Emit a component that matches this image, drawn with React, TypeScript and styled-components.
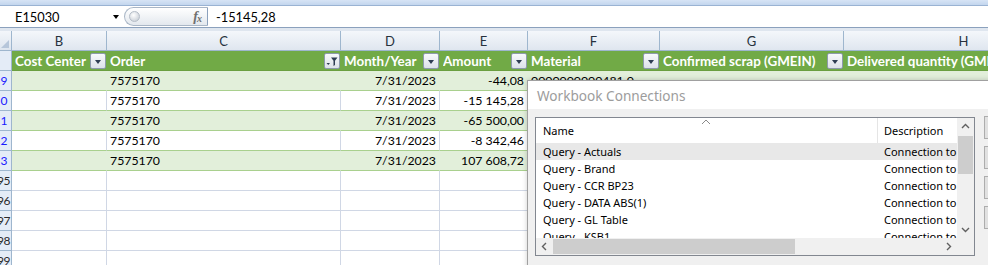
import React from "react";
import styled, { createGlobalStyle } from "styled-components";

const GlobalStyle = createGlobalStyle`
  html, body { margin: 0; padding: 0; background: #fff; }
  #root { width: 988px; height: 265px; }
`;

const COLS = "12px 95px 234px 99px 88px 132px 184px 240px";

const Root = styled.div`
  position: relative;
  width: 988px;
  height: 265px;
  overflow: hidden;
  font-family: Lato, "Liberation Sans", sans-serif;
  font-size: 12.3px;
  color: #000;
`;

const TopStrip = styled.div`
  height: 5px;
  background: linear-gradient(#d7e4f5, #c3d6ee);
  border-bottom: 1px solid #9ab3d3;
`;

const FormulaBar = styled.div`
  display: flex;
  align-items: center;
  height: 21px;
  background: #fff;
  border-bottom: 1px solid #8ba1bd;
`;

const NameBox = styled.div`
  width: 113px;
  box-sizing: border-box;
  padding-left: 15px;
  font-size: 12.8px;
`;

const NameArrow = styled.div`
  width: 0;
  height: 0;
  border-left: 3.5px solid transparent;
  border-right: 3.5px solid transparent;
  border-top: 4px solid #000;
  margin-right: 5px;
`;

const FxPill = styled.div`
  width: 84px;
  height: 19px;
  box-sizing: border-box;
  display: flex;
  align-items: center;
  justify-content: space-between;
  padding: 0 6px 0 4px;
  border: 1px solid #a9b6c6;
  border-right-color: #8ba1bd;
  border-radius: 10px 0 0 10px;
  background: linear-gradient(#ffffff, #e3e8ee);
`;

const Grip = styled.div`
  width: 9px;
  height: 9px;
  border-radius: 50%;
  border: 1px solid #b4bcc7;
  background: radial-gradient(circle at 40% 35%, #ffffff, #bfc6cf);
`;

const Fx = styled.span`
  font-family: "Liberation Serif", serif;
  font-style: italic;
  font-weight: 700;
  font-size: 14px;
  color: #707070;
  letter-spacing: -1px;

  sub {
    font-size: 10px;
    vertical-align: -1px;
  }
`;

const FormulaText = styled.div`
  padding-left: 8px;
  font-size: 12.8px;
`;

const Gutter = styled.div`
  height: 3px;
  background: #dfe6ef;
`;

const GridRow = styled.div`
  display: grid;
  grid-template-columns: ${COLS};
  height: 20px;
`;

const Corner = styled.div`
  box-sizing: border-box;
  display: flex;
  align-items: flex-end;
  justify-content: flex-end;
  padding: 0 2px 2px 0;
  background: linear-gradient(#f3f6fa, #dde5ef);
  border-right: 1px solid #9eb6ce;
  border-bottom: 1px solid #9eb6ce;
`;

const ColLetter = styled.div`
  box-sizing: border-box;
  display: flex;
  align-items: center;
  justify-content: center;
  background: linear-gradient(#f4f7fb, #dfe6ef);
  border-right: 1px solid #9eb6ce;
  border-bottom: 1px solid #9eb6ce;
  color: #27313d;
  font-size: 13px;
`;

const RowNum = styled.div<{ $blue?: boolean }>`
  box-sizing: border-box;
  display: flex;
  align-items: center;
  justify-content: flex-end;
  padding-right: ${(p) => (p.$blue ? 4 : 1)}px;
  overflow: hidden;
  white-space: nowrap;
  background: #e4ecf7;
  border-right: 1px solid #9eb6ce;
  border-bottom: 1px solid #9eb6ce;
  color: ${(p) => (p.$blue ? "#1a1aff" : "#2a2a2a")};
  font-size: 12px;
  letter-spacing: -0.5px;
`;

const HeadCell = styled.div`
  box-sizing: border-box;
  display: flex;
  align-items: center;
  padding: 0 1px 0 3px;
  background: #71aa46;
  border-bottom: 1px solid #6a9f40;
  color: #fff;
  font-weight: 700;
  font-size: 13.4px;
  white-space: nowrap;
  overflow: hidden;
`;

const HeadLabel = styled.span`
  flex: 1;
  overflow: hidden;
`;

const FilterButton = styled.div`
  flex: none;
  width: 16px;
  height: 16px;
  box-sizing: border-box;
  display: flex;
  align-items: center;
  justify-content: center;
  border: 1px solid #8d9aab;
  border-radius: 2px;
  background: linear-gradient(#f7f9fb, #dde2e9);
`;

const Caret = styled.div`
  width: 0;
  height: 0;
  margin-top: 2px;
  border-left: 3.5px solid transparent;
  border-right: 3.5px solid transparent;
  border-top: 4px solid #2e3d52;
`;

type Tone = "band" | "white" | "grid";

const Cell = styled.div<{ $tone: Tone; $right?: boolean }>`
  box-sizing: border-box;
  display: flex;
  align-items: center;
  justify-content: ${(p) => (p.$right ? "flex-end" : "flex-start")};
  padding: 0 3px;
  white-space: nowrap;
  overflow: hidden;
  background: ${(p) => (p.$tone === "band" ? "#e2efda" : "#fff")};
  border-bottom: 1px solid ${(p) => (p.$tone === "grid" ? "#d0d7e5" : "#a9d08e")};
  border-right: 1px solid ${(p) => (p.$tone === "band" ? "#e2efda" : "#d0d7e5")};
`;

/* dialog */
const Dialog = styled.div`
  position: absolute;
  left: 527px;
  top: 80px;
  width: 540px;
  height: 200px;
  background: #f0f0f0;
  border: 1px solid #a0a0a0;
  box-shadow: 0 0 5px rgba(0, 0, 0, 0.2);
  font-family: "Noto Sans", "Open Sans", sans-serif;
  font-size: 11px;
  color: #000;
`;

const DialogTitle = styled.div`
  height: 28px;
  display: flex;
  align-items: center;
  padding-left: 9px;
  background: #fff;
  color: #9c9c9c;
  font-size: 13.6px;
`;

const DialogBody = styled.div`
  display: flex;
  gap: 9px;
  padding: 8px 0 0 7px;
`;

const ListBox = styled.div`
  flex: none;
  width: 440px;
  height: 139px;
  box-sizing: border-box;
  border: 1px solid #828790;
  background: #fff;
  display: grid;
  grid-template-columns: 1fr 17px;
  grid-template-rows: 1fr 17px;
  overflow: hidden;
`;

const ListContent = styled.div`
  overflow: hidden;
`;

const ListRow = styled.div<{ $head?: boolean; $hot?: boolean }>`
  display: grid;
  grid-template-columns: 341px 1fr;
  height: ${(p) => (p.$head ? 25 : 17)}px;
  background: ${(p) => (p.$hot ? "#e8e8e8" : "transparent")};
`;

const ListCell = styled.div<{ $sep?: boolean }>`
  position: relative;
  display: flex;
  align-items: center;
  padding-left: ${(p) => (p.$sep ? 6 : 7)}px;
  white-space: nowrap;
  overflow: hidden;
  border-left: ${(p) => (p.$sep ? "1px solid #e5e5e5" : "none")};
`;

const SortMark = styled.svg`
  position: absolute;
  left: 165px;
  top: 1px;
`;

const VScroll = styled.div`
  background: #f0f0f0;
  display: flex;
  flex-direction: column;
  align-items: center;
`;

const HScroll = styled.div`
  background: #f0f0f0;
  display: flex;
  align-items: center;
`;

const ScrollArrow = styled.div`
  flex: none;
  width: 17px;
  height: 17px;
  display: flex;
  align-items: center;
  justify-content: center;
`;

const VThumb = styled.div`
  width: 15px;
  height: 38px;
  margin-top: 1px;
  background: #cdcdcd;
`;

const HThumb = styled.div`
  width: 242px;
  height: 15px;
  background: #cdcdcd;
`;

const Spacer = styled.div`
  flex: 1;
`;

const ScrollCorner = styled.div`
  background: #f0f0f0;
`;

const ButtonColumn = styled.div`
  flex: none;
  display: flex;
  flex-direction: column;
  gap: 7px;
  margin-top: -1px;
`;

const SideButton = styled.div`
  width: 80px;
  height: 23px;
  box-sizing: border-box;
  border: 1px solid #adadad;
  background: #e1e1e1;
`;

const Chevron = ({ dir }: { dir: "up" | "down" | "left" | "right" }) => {
  const pts = {
    up: "1,6 4.5,2.5 8,6",
    down: "1,3 4.5,6.5 8,3",
    left: "6,1 2.5,4.5 6,8",
    right: "3,1 6.5,4.5 3,8",
  }[dir];
  return (
    <svg width="9" height="9" viewBox="0 0 9 9">
      <polyline points={pts} fill="none" stroke="#606060" strokeWidth="1.4" />
    </svg>
  );
};

const columns = [
  { key: "B", title: "Cost Center" },
  { key: "C", title: "Order", filtered: true },
  { key: "D", title: "Month/Year" },
  { key: "E", title: "Amount" },
  { key: "F", title: "Material" },
  { key: "G", title: "Confirmed scrap (GMEIN)" },
  { key: "H", title: "Delivered quantity (GMEIN)" },
];

// only the tail of each row number fits in the cropped row header
const dataRows = [
  { n: "9", amount: "-44,08", material: "0000000000481 0" },
  { n: "0", amount: "-15 145,28", material: "" },
  { n: "1", amount: "-65 500,00", material: "" },
  { n: "2", amount: "-8 342,46", material: "" },
  { n: "3", amount: "107 608,72", material: "" },
];

const emptyRows = ["95", "96", "97", "98", "99"];

const connections = [
  "Query - Actuals",
  "Query - Brand",
  "Query - CCR BP23",
  "Query - DATA ABS(1)",
  "Query - GL Table",
  "Query - KSB1",
];

export default function App() {
  return (
    <Root>
      <GlobalStyle />
      <TopStrip />
      <FormulaBar>
        <NameBox>E15030</NameBox>
        <NameArrow />
        <FxPill>
          <Grip />
          <Fx>
            f<sub>x</sub>
          </Fx>
        </FxPill>
        <FormulaText>-15145,28</FormulaText>
      </FormulaBar>
      <Gutter />

      <GridRow>
        <Corner>
          <svg width="8" height="8" viewBox="0 0 8 8">
            <polygon points="8,0 8,8 0,8" fill="#b6c6da" />
          </svg>
        </Corner>
        {columns.map((c) => (
          <ColLetter key={c.key}>{c.key}</ColLetter>
        ))}
      </GridRow>

      <GridRow>
        <RowNum $blue />
        {columns.map((c) => (
          <HeadCell key={c.key}>
            <HeadLabel>{c.title}</HeadLabel>
            {c.key !== "H" && (
              <FilterButton>
                {c.filtered ? (
                  <svg width="12" height="12" viewBox="0 0 12 12">
                    <polygon points="0.5,8 4,8 2.25,10" fill="#2e3d52" />
                    <path d="M5 2.5 H11.5 L9 5.8 V10 L7.5 11 V5.8 Z" fill="#2e3d52" />
                  </svg>
                ) : (
                  <Caret />
                )}
              </FilterButton>
            )}
          </HeadCell>
        ))}
      </GridRow>

      {dataRows.map((r, i) => {
        const tone: Tone = i % 2 === 0 ? "band" : "white";
        return (
          <GridRow key={r.n}>
            <RowNum $blue>{r.n}</RowNum>
            <Cell $tone={tone} />
            <Cell $tone={tone}>7575170</Cell>
            <Cell $tone={tone} $right>
              7/31/2023
            </Cell>
            <Cell $tone={tone} $right>
              {r.amount}
            </Cell>
            <Cell $tone={tone}>{r.material}</Cell>
            <Cell $tone={tone} />
            <Cell $tone={tone} />
          </GridRow>
        );
      })}

      {emptyRows.map((n) => (
        <GridRow key={n}>
          <RowNum>{n}</RowNum>
          {columns.map((c) => (
            <Cell key={c.key} $tone="grid" />
          ))}
        </GridRow>
      ))}

      <Dialog>
        <DialogTitle>Workbook Connections</DialogTitle>
        <DialogBody>
          <ListBox>
            <ListContent>
              <ListRow $head>
                <ListCell>
                  Name
                  <SortMark width="10" height="6" viewBox="0 0 10 6">
                    <polyline points="1,5 5,1 9,5" fill="none" stroke="#8a8a8a" strokeWidth="1" />
                  </SortMark>
                </ListCell>
                <ListCell $sep>Description</ListCell>
              </ListRow>
              {connections.map((c, i) => (
                <ListRow key={c} $hot={i === 0}>
                  <ListCell>{c}</ListCell>
                  <ListCell>Connection to the '{c.replace("Query - ", "")}' query in the workbook.</ListCell>
                </ListRow>
              ))}
            </ListContent>
            <VScroll>
              <ScrollArrow>
                <Chevron dir="up" />
              </ScrollArrow>
              <VThumb />
              <Spacer />
              <ScrollArrow>
                <Chevron dir="down" />
              </ScrollArrow>
            </VScroll>
            <HScroll>
              <ScrollArrow>
                <Chevron dir="left" />
              </ScrollArrow>
              <HThumb />
              <Spacer />
              <ScrollArrow>
                <Chevron dir="right" />
              </ScrollArrow>
            </HScroll>
            <ScrollCorner />
          </ListBox>
          <ButtonColumn>
            <SideButton />
            <SideButton />
            <SideButton />
            <SideButton />
          </ButtonColumn>
        </DialogBody>
      </Dialog>
    </Root>
  );
}
